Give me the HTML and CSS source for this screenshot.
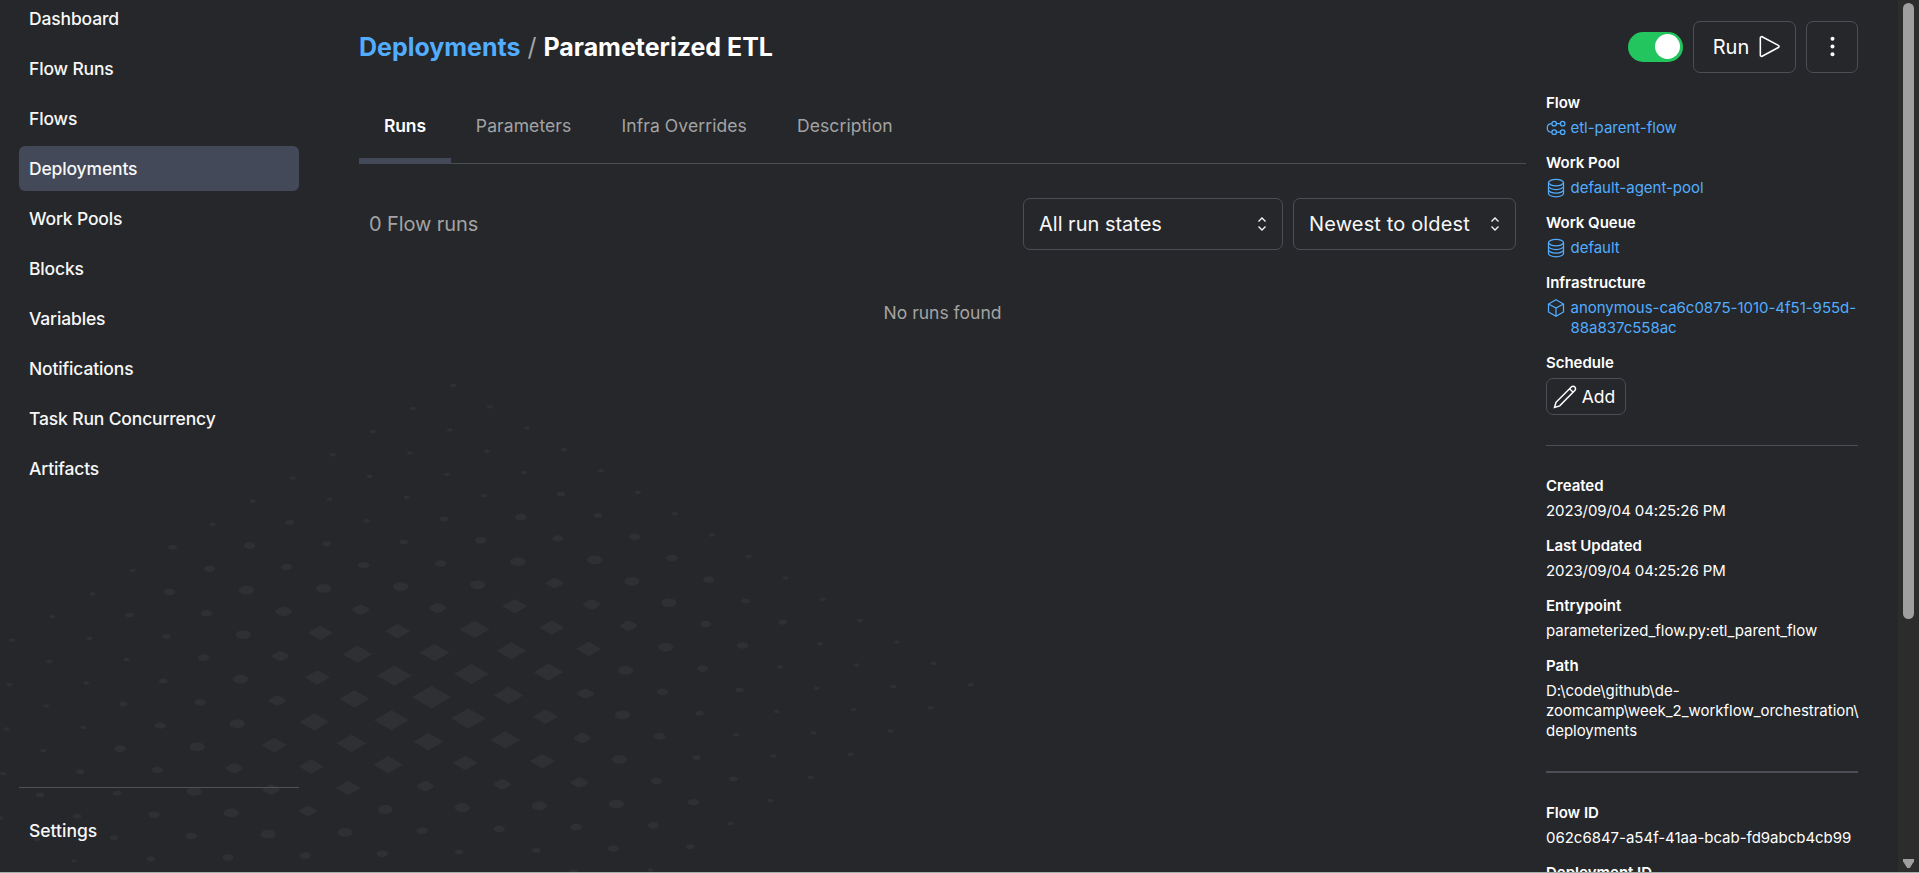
FILE: index.html
```html
<!DOCTYPE html>
<html lang="en">
<head>
<meta charset="utf-8">
<title>Parameterized ETL</title>
<link rel="stylesheet" href="styles.css">
</head>
<body>
<svg class="backdrop" width="1000" height="873" aria-hidden="true"></svg>
<svg class="sprite" aria-hidden="true">
  <symbol id="i-db" viewBox="0 0 24 24"><ellipse cx="12" cy="5.500" rx="9" ry="3.800"/><path d="M3 5.500v13c0 2.200 4 4 9 4s9-1.800 9-4v-13M3 9.800c0 2.200 4 4 9 4s9-1.800 9-4M3 14.100c0 2.200 4 4 9 4s9-1.800 9-4"/></symbol>
  <symbol id="i-flow" viewBox="0 0 24 24"><circle cx="9.800" cy="6.800" r="2.700"/><circle cx="20" cy="6.800" r="2.700"/><circle cx="9.800" cy="17" r="2.700"/><circle cx="20" cy="17" r="2.700"/><path d="M12.500 6.800h4.800M12.500 17h4.800M7.100 6.800C3.500 6.800 1.500 9 1.500 11.900S3.500 17 7.100 17"/></symbol>
  <symbol id="i-cube" viewBox="0 0 24 24"><path d="M12 2l9 5.200v9.600L12 22l-9-5.200V7.200zM3 7.200l9 4.800 9-4.800M12 12v10"/></symbol>
</svg>
<div class="app">
  <nav class="sidebar">
    <a class="nav-item">Dashboard</a>
    <a class="nav-item">Flow Runs</a>
    <a class="nav-item">Flows</a>
    <a class="nav-item nav-item--active">Deployments</a>
    <a class="nav-item">Work Pools</a>
    <a class="nav-item">Blocks</a>
    <a class="nav-item">Variables</a>
    <a class="nav-item">Notifications</a>
    <a class="nav-item">Task Run Concurrency</a>
    <a class="nav-item">Artifacts</a>
    <div class="nav-footer"><a class="nav-item">Settings</a></div>
  </nav>
  <main class="page">
    <header class="heading">
      <h1 class="crumbs"><a class="link">Deployments</a><span class="slash">/</span><span>Parameterized ETL</span></h1>
      <div class="actions">
        <span class="toggle"><span class="knob"></span></span>
        <button class="button button--run">Run
          <svg class="icon-run" viewBox="0 0 24 24"><path d="M3.200 3.700v16.600c0 .9.900 1.400 1.700 1L20.500 13c.9-.5.900-1.600 0-2.100L4.900 2.700c-.8-.4-1.700.1-1.700 1z"/></svg>
        </button>
        <button class="button button--more"><svg class="icon-more" viewBox="0 0 24 24"><circle cx="12" cy="4.500" r="1.900"/><circle cx="12" cy="12" r="1.900"/><circle cx="12" cy="19.500" r="1.900"/></svg></button>
      </div>
    </header>
    <div class="columns">
      <section class="content">
        <div class="tabs">
          <span class="tab tab--active">Runs</span><span class="tab">Parameters</span><span class="tab">Infra Overrides</span><span class="tab">Description</span>
        </div>
        <div class="filters">
          <span class="count">0 Flow runs</span>
          <div class="select select--state">All run states<svg class="chevrons" viewBox="0 0 10 14"><path d="M1.500 4.500L5 1l3.500 3.500M1.500 9.500L5 13l3.500-3.500"/></svg></div>
          <div class="select select--sort">Newest to oldest<svg class="chevrons" viewBox="0 0 10 14"><path d="M1.500 4.500L5 1l3.500 3.500M1.500 9.500L5 13l3.500-3.500"/></svg></div>
        </div>
        <p class="empty">No runs found</p>
      </section>
      <aside class="details">
        <dl class="pair"><dt>Flow</dt><dd class="resource"><svg class="icon"><use href="#i-flow"/></svg><span>etl-parent-flow</span></dd></dl>
        <dl class="pair"><dt>Work Pool</dt><dd class="resource"><svg class="icon"><use href="#i-db"/></svg><span>default-agent-pool</span></dd></dl>
        <dl class="pair"><dt>Work Queue</dt><dd class="resource"><svg class="icon"><use href="#i-db"/></svg><span>default</span></dd></dl>
        <dl class="pair"><dt>Infrastructure</dt><dd class="resource"><svg class="icon"><use href="#i-cube"/></svg><span>anonymous-ca6c0875-1010-4f51-955d-<br>88a837c558ac</span></dd></dl>
        <dl class="pair"><dt>Schedule</dt><dd><button class="button button--add"><svg class="icon-pencil" viewBox="0 0 24 24"><path d="M1.500 22.500l1.500-5.200L18.300 2a2.300 2.300 0 0 1 3.500 3.500L6.700 20.900zM16.600 3.800l3.500 3.500"/></svg>Add</button></dd></dl>
        <hr class="rule">
        <dl class="pair tight"><dt>Created</dt><dd>2023/09/04 04:25:26 PM</dd></dl>
        <dl class="pair tight"><dt>Last Updated</dt><dd>2023/09/04 04:25:26 PM</dd></dl>
        <dl class="pair"><dt>Entrypoint</dt><dd>parameterized_flow.py:etl_parent_flow</dd></dl>
        <dl class="pair"><dt>Path</dt><dd>D:\code\github\de-<br>zoomcamp\week_2_workflow_orchestration\<br>deployments</dd></dl>
        <hr class="rule rule--thick">
        <dl class="pair"><dt>Flow ID</dt><dd>062c6847-a54f-41aa-bcab-fd9abcb4cb99</dd></dl>
        <dl class="pair"><dt>Deployment ID</dt></dl>
      </aside>
    </div>
  </main>
  <div class="scrollbar"><div class="thumb"></div><div class="arrow"></div></div>
</div>
<div class="edge"></div>
<script src="backdrop.js"></script>
</body>
</html>
```
FILE: styles.css
```css
* { box-sizing: border-box; }
body {
  margin: 0;
  height: 873px;
  overflow: hidden;
  background: #25272b;
  color: #fff;
  font-family: Inter, "Liberation Sans", sans-serif;
  font-size: 17.5px;
}
.sprite { position: absolute; width: 0; height: 0; }
.backdrop { position: absolute; left: 0; top: 0; fill: #2f3034; }
.app { position: relative; display: flex; height: 873px; overflow: hidden; }

.sidebar {
  width: 319px;
  flex: none;
  padding: 0 20px 20px 19px;
  display: flex;
  flex-direction: column;
  gap: 5px;
  margin-top: -4px;
}
.nav-item {
  flex: none;
  height: 45px;
  padding: 0 10px;
  line-height: 45px;
  border-radius: 6px;
  font-weight: 500;
  letter-spacing: -0.15px;
  color: #f7f7f7;
}
.nav-item--active { background: #434958; }
.nav-footer { margin-top: auto; border-top: 1px solid #4f5157; padding-top: 20px; display: flex; flex-direction: column; }
.nav-footer .nav-item { letter-spacing: 0; }

.page { flex: 1; padding: 20px 40px 0 40px; min-width: 0; }
.heading { display: flex; justify-content: space-between; align-items: center; height: 53px; }
.crumbs { margin: 2px 0 0; font-size: 25px; font-weight: 700; line-height: 35px; display: flex; gap: 7px; letter-spacing: -0.02px; }
.link { color: #52adff; }
.slash { color: #a3a3a3; font-weight: 400; }
.actions { display: flex; align-items: center; gap: 10px; }
.toggle { width: 55px; height: 30px; border-radius: 15px; background: #22c55e; display: flex; justify-content: flex-end; padding: 2.500px 3px; }
.knob { width: 25px; height: 25px; border-radius: 50%; background: #fff; }
.button {
  border: 1px solid #4c4e56;
  border-radius: 7px;
  background: transparent;
  color: #fff;
  font: inherit;
  display: flex;
  align-items: center;
  justify-content: center;
  padding: 0;
}
.button--run { width: 103px; height: 52px; font-size: 20px; gap: 8px; padding-left: 6px; }
.icon-run { width: 25px; height: 25px; fill: none; stroke: #fff; stroke-width: 1.500; }
.button--more { width: 52px; height: 52px; }
.icon-more { width: 25px; height: 25px; fill: #fff; }

.columns { display: flex; gap: 20px; }
.content { width: 1167px; flex: none; padding-top: 21px; }
.tabs { display: flex; height: 70px; border-bottom: 1px solid #4c4e54; }
.tab { height: 70px; padding: 0 25px; line-height: 63px; color: #a3a3a3; letter-spacing: 0.1px; }
.tab--active { color: #fff; font-weight: 600; border-bottom: 6px solid #434958; letter-spacing: -0.15px; }
.filters { display: flex; align-items: center; gap: 10px; padding: 34px 10px 0; height: 86px; font-size: 20px; }
.count { flex: 1; color: #a3a3a3; letter-spacing: -0.1px; }
.select { height: 52px; border: 1px solid #4c4e56; border-radius: 7px; display: flex; align-items: center; justify-content: space-between; padding: 0 15px; color: #f7f7f7; }
.select--state { width: 260px; }
.select--sort { width: 223px; letter-spacing: 0.15px; }
.chevrons { width: 10px; height: 14px; fill: none; stroke: #f7f7f7; stroke-width: 1.300; }
.empty { margin: 50px 0 0; text-align: center; color: #a3a3a3; line-height: 25px; }

.details { width: 312px; flex: none; padding-top: 20px; font-size: 15px; line-height: 20px; letter-spacing: -0.02px; }
.pair { margin: 0 0 15px; }
.pair dt { font-weight: 600; margin-bottom: 5px; }
.pair dd { margin: 0; white-space: nowrap; }
.tight dd { letter-spacing: -0.1px; }
.resource { display: flex; gap: 4.500px; color: #52adff; }
.icon { width: 20px; height: 20px; flex: none; fill: none; stroke: #52adff; stroke-width: 1.500; }
.button--add { width: 80px; height: 37px; font-size: 17.500px; gap: 5px; padding-right: 4px; }
.icon-pencil { width: 24px; height: 24px; fill: none; stroke: #fff; stroke-width: 1.500; }
.rule { border: 0; height: 1px; margin: 30px 0; background: #4c4e56; }
.rule--thick { height: 2px; }

.scrollbar { width: 21px; flex: none; background: #2c2c2c; display: flex; flex-direction: column; justify-content: space-between; align-items: center; padding: 3px 0 5px; }
.thumb { width: 11px; height: 616px; border-radius: 6px; background: #9f9f9f; }
.arrow { width: 11px; height: 9px; background: #9f9f9f; clip-path: polygon(0 0, 100% 0, 100% 25%, 62% 100%, 38% 100%, 0 25%); }
.edge { position: absolute; left: 0; top: 872px; width: 100%; height: 1px; background: #a3b1b3; }
```
FILE: backdrop.js
```js
// Dot lattice: each string is one diagonal row, each digit a dot size.
const rows = [
  "111111111111111", "111122333221111", "111133444331111", "111234555432111",
  "111234666432111", "122345777543221", "133456787654331", "234567898765432",
  "133456787654331", "122345777543221", "111234666432111", "111234555432111",
  "111133444331111", "111122333221111", "111122222221111", "111111111111111"
];
const rx = [0, 3, 4.3, 5.7, 7.6, 10.2, 12.7, 15, 17.5, 19.5];
const svg = document.querySelector(".backdrop");
rows.forEach((row, k) => {
  [...row].forEach((digit, i) => {
    const level = Number(digit);
    const x = 453 + i * 36.98 - k * 40.06;
    const y = 385.3 + i * 21.386 + k * 23.15;
    const w = rx[level];
    const h = w * 0.58;
    const p = document.createElementNS("http://www.w3.org/2000/svg", "path");
    const t = level >= 8 ? 0.04 : level === 7 ? 0.07 : level === 6 ? 0.15 : 0.32;
    if (level < 5) {
      p.setAttribute("d", `M${x - w} ${y}a${w} ${h} 0 1 0 ${2 * w} 0a${w} ${h} 0 1 0 ${-2 * w} 0z`);
    } else {
      const q = (sx, sy) => `${x + sx * w} ${y + sy * h}`;
      p.setAttribute("d", `M${q(-1 + t, -t)}L${q(-t, -1 + t)}Q${q(0, -1.1 + t / 4)} ${q(t, -1 + t)}L${q(1 - t, -t)}Q${q(1.1 - t / 4, 0)} ${q(1 - t, t)}L${q(t, 1 - t)}Q${q(0, 1.1 - t / 4)} ${q(-t, 1 - t)}L${q(-1 + t, t)}Q${q(-1.1 + t / 4, 0)} ${q(-1 + t, -t)}z`);
    }
    svg.appendChild(p);
  });
});
```
